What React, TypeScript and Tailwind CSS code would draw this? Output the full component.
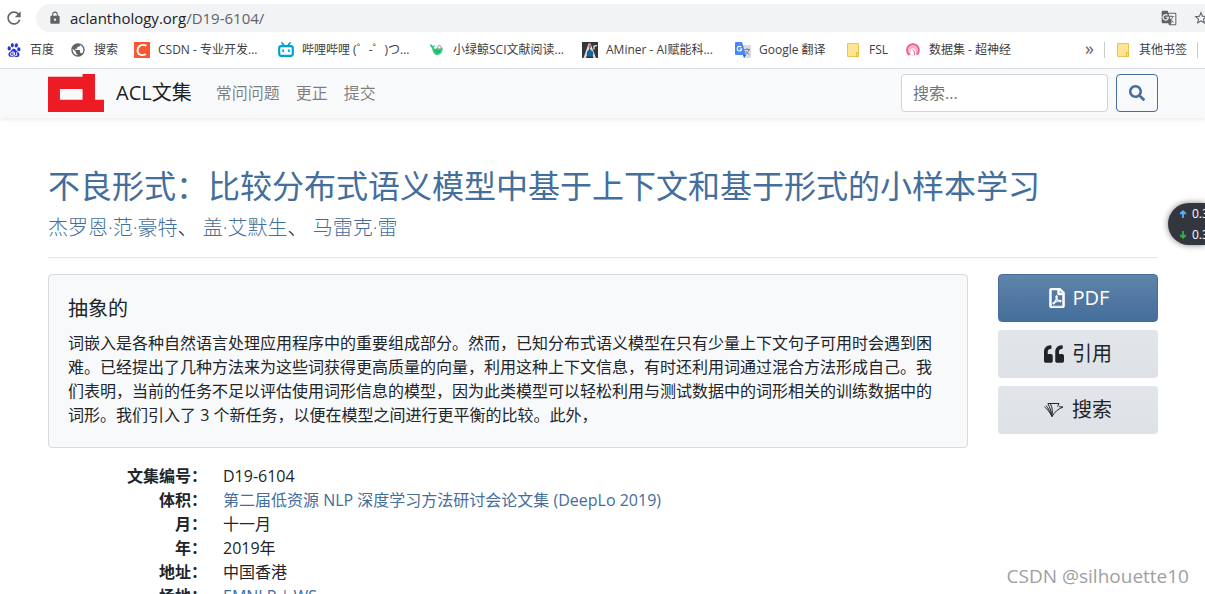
import React from "react";
import { FaQuoteLeft, FaRegFilePdf, FaSearch } from "react-icons/fa";
import { MdGTranslate, MdLock, MdPublic, MdRefresh, MdStarBorder } from "react-icons/md";
import { SiBaidu } from "react-icons/si";

const FolderIcon = () => (
  <svg viewBox="0 0 16 16" className="size-4">
    <path d="M2.500 1.500h11v13h-11z" fill="#ffe592" stroke="#ecc650" />
    <path d="M11.500 14.500v-4h2v4z" fill="#ffe592" stroke="#e5b93c" />
  </svg>
);

const CsdnIcon = () => (
  <svg viewBox="0 0 16 16" className="size-4">
    <path d="M0 0h16v16H0z" fill="#fc5531" />
    <path
      d="M12.400 4C10.600 2.600 7.300 2.400 5.300 4.200 3.200 6.200 3 9.800 4.500 11.600c1.700 2 5.300 1.800 7.300.4"
      fill="none"
      stroke="#fff"
      strokeWidth="1.900"
    />
  </svg>
);

const BilibiliIcon = () => (
  <svg viewBox="0 0 16 16" className="size-4">
    <path d="m4 1 2 2.500M12 1l-2 2.500" fill="none" stroke="#00a1d6" strokeWidth="1.800" strokeLinecap="round" />
    <rect x="1.200" y="4.200" width="13.600" height="9.600" rx="2" fill="none" stroke="#00a1d6" strokeWidth="2.200" />
    <path d="M5.200 7.500v2.500M10.800 7.500v2.500" stroke="#00a1d6" strokeWidth="1.800" />
    <path d="M3 14.500h2M11 14.500h2" stroke="#00a1d6" strokeWidth="1.500" />
  </svg>
);

const WhaleIcon = () => (
  <svg viewBox="0 0 16 16" className="size-4">
    <path
      d="M1 2.500c1.500 0 2.500.6 3 1.700.6-.7 1.300-.9 2-.7-.2 1.200-.7 2-1.600 2.500 2.200 1.800 3.400-.5 6-.5h3.200c.3 4.500-2 7.500-5.400 7.500C5 13 3.500 9.500 3 6 1.800 5.300 1 4 1 2.500z"
      fill="#2fc878"
    />
    <circle cx="10.300" cy="5" r="2.300" fill="#b9bcc0" />
    <circle cx="10.300" cy="5.300" r="1" fill="#fff" />
    <path d="M6.500 8.500c1 1.500 3 1.500 4.500.5" fill="none" stroke="#1a9a58" />
  </svg>
);

const AMinerIcon = () => (
  <svg viewBox="0 0 16 16" className="size-4">
    <path d="M0 0h16v16H0z" fill="#363636" />
    <path d="M1.500 16 6.500 1.500h2L14 16h-2.500L7.600 5.500 4 16z" fill="#d8dde2" />
    <circle cx="8" cy="11.500" r="3.200" fill="#16649c" />
    <path d="M6.800 2.500h2V6h-2z" fill="#b8567c" />
    <path d="M12 7.500V3.500M12 5c.5-1.200 1.500-1.500 3-1.200" fill="none" stroke="#e8e8e8" strokeWidth="1.200" />
  </svg>
);

const TranslateIcon = () => (
  <svg viewBox="0 0 16 16" className="size-4">
    <path d="M6 3h9a1 1 0 0 1 1 1v11a1 1 0 0 1-1 1H9z" fill="#dadce0" />
    <path
      d="M9.500 7.500H15M12.200 6v1.500M14 7.500c-.5 2.500-2 4-3.500 5M10.800 9c.8 1.700 2 2.800 3.500 3.500"
      fill="none"
      stroke="#7b8590"
    />
    <path d="M1 0h6l4 13H1a1 1 0 0 1-1-1V1a1 1 0 0 1 1-1z" fill="#4a87f0" />
    <path d="m8 13 3 0-2 3z" fill="#2a56c6" />
    <path d="M6.300 5.200A2.300 2.300 0 1 0 6.800 7H4.700" fill="none" stroke="#fff" strokeWidth="1.100" />
  </svg>
);

const HyperIcon = () => (
  <svg viewBox="0 0 16 16" className="size-4">
    <circle cx="8" cy="8" r="6" fill="#f9b4cd" />
    <path d="M4.500 13A6 6 0 1 1 12 12.500" fill="none" stroke="#ee5a92" strokeWidth="1.800" />
    <path d="M6 13.500C4.500 9 6 6.500 8 6.500s3.500 2.500 2.500 7z" fill="#fff" />
    <path d="M7.500 7.500c1.500 1 2.200 3 2 5.500" fill="none" stroke="#ee5a92" />
  </svg>
);

const ScholarIcon = () => (
  <svg viewBox="0 0 20 16" className="h-4 w-5" fill="none" stroke="#212529">
    <path d="M4 1.500h11l-1.500 3M8 14.500c2.500-4.500 6-7.500 11-9.500l-4-.3" />
    <path d="M8 14.500C6 10.500 3.500 7 .5 5M8 14.500C6.500 10 4.500 6.500 2 3.500M8 14.500C7.500 10 6.200 6 3.800 1.500M8 13C8.800 9 8.200 5 6.500 2" />
  </svg>
);

const bookmarks = [
  { label: "百度", width: "w-16", icon: <SiBaidu className="size-4 p-px text-[#2932e1]" /> },
  { label: "搜索", width: "w-16", icon: <MdPublic className="size-4 text-[#5f6368]" /> },
  { label: "CSDN - 专业开发...", width: "w-36", icon: <CsdnIcon /> },
  { label: "哔哩哔哩 (゜-゜)つ...", width: "w-[151px]", icon: <BilibiliIcon /> },
  { label: "小绿鲸SCI文献阅读...", width: "w-[153px]", icon: <WhaleIcon /> },
  { label: "AMiner - AI赋能科...", width: "w-[153px]", icon: <AMinerIcon /> },
  { label: "Google 翻译", width: "w-[110px]", icon: <TranslateIcon /> },
  { label: "FSL", width: "w-[60px]", icon: <FolderIcon /> },
  { label: "数据集 - 超神经", width: "w-[110px]", icon: <HyperIcon /> },
];

const authors = ["杰罗恩·范·豪特", "盖·艾默生", "马雷克·雷"];

const details = [
  { term: "文集编号：", value: "D19-6104" },
  { term: "体积：", value: "第二届低资源 NLP 深度学习方法研讨会论文集 (DeepLo 2019)", link: true },
  { term: "月：", value: "十一月" },
  { term: "年：", value: "2019年" },
  { term: "地址：", value: "中国香港" },
];

const BrowserBar = () => (
  <div className="bg-white text-[#3c4043]">
    <div className="flex items-center pt-1">
      <button aria-label="重新加载" className="flex w-9 items-center pl-1 text-[#5f6368]">
        <MdRefresh className="size-5" />
      </button>
      <div className="flex h-7 flex-1 items-center overflow-hidden rounded-l-full bg-[#f1f3f4] pl-3">
        <MdLock className="size-3.5 text-[#5f6368]" />
        <button className="ml-2 text-[15px] leading-5 text-[#202124]">
          aclanthology.org<span className="text-[#5f6368]">/D19-6104/</span>
        </button>
        <button aria-label="翻译此页" className="ml-auto text-[#5f6368]">
          <MdGTranslate className="size-4" />
        </button>
        <button aria-label="收藏" className="-mr-1 ml-4 text-[#5f6368]">
          <MdStarBorder className="size-4" />
        </button>
      </div>
    </div>
    <nav className="flex h-[37px] items-center border-b border-[#dadce0] pl-1.5 text-xs whitespace-nowrap">
      <div className="flex">
        {bookmarks.map((b) => (
          <a key={b.label} href="#" className={`flex items-center gap-2 ${b.width}`}>
            {b.icon}
            {b.label}
          </a>
        ))}
      </div>
      <div className="ml-auto flex items-center gap-2.5">
        <button aria-label="更多书签" className="pb-1 text-lg leading-4 text-[#5f6368]">
          »
        </button>
        <div className="h-4 w-px bg-[#c8cbcf]" />
        <a href="#" className="flex items-center gap-2">
          <FolderIcon />
          其他书签
        </a>
        <div className="mr-[7px] h-4 w-px bg-[#c8cbcf]" />
      </div>
    </nav>
  </div>
);

const Navbar = () => (
  <header className="flex items-center bg-linear-to-b from-[#f9fafb] to-[#f8f9fa] pt-[5px] pr-[47px] pb-1.5 pl-12 shadow-[0_2px_4px_rgba(0,0,0,0.075)]">
    <a href="#" className="flex items-center text-xl text-black/90">
      <svg viewBox="0 0 68 46" className="mr-3 h-[38px] w-14">
        <path fill="#ed1c24" d="M41.977 -.05V3.150H0v43.050h68v-15h-10.900V-.05zm0 18.200v13.050H14.500V18.150z" />
      </svg>
      ACL文集
    </a>
    <nav className="ml-6 flex gap-4 text-base text-black/50">
      <a href="#">常问问题</a>
      <a href="#">更正</a>
      <a href="#">提交</a>
    </nav>
    <form className="ml-auto flex gap-2">
      <input
        aria-label="搜索"
        placeholder="搜索..."
        className="h-[38px] w-[207px] rounded border border-[#ced4da] bg-white px-[11px] text-base placeholder:text-[#6c757d]"
      />
      <button
        type="button"
        aria-label="搜索"
        className="flex h-[38px] w-[42px] items-center justify-center rounded border border-[#446e9b] text-[#446e9b]"
      >
        <FaSearch className="size-4" />
      </button>
    </form>
  </header>
);

const SpeedBadge = () => (
  <div className="absolute top-[203px] right-0 flex h-[42px] w-[37px] flex-col justify-around overflow-hidden rounded-l-full bg-[#33363f] pl-2.5 text-xs leading-5 text-white shadow-[0_0_6px_rgba(0,0,0,0.5)]">
    {[
      { d: "M4.500 8V2M2 4.500l2.500-2.500 2.500 2.500", color: "#4db8ff" },
      { d: "M4.500 1v6M2 4.500l2.500 2.500 2.500-2.500", color: "#2fb344" },
    ].map((row) => (
      <div key={row.d} className="flex items-center gap-1">
        <svg viewBox="0 0 9 9" className="size-2.5 shrink-0">
          <path d={row.d} fill="none" stroke={row.color} strokeWidth="1.600" />
        </svg>
        0.3
      </div>
    ))}
  </div>
);

const App = () => {
  return (
    <div className="relative h-screen overflow-hidden bg-white font-['Open_Sans','Noto_Sans_CJK_SC',sans-serif] text-[#212529]">
      <BrowserBar />
      <Navbar />
      <main className="pt-12 pr-[47px] pl-12">
        <h2 className="text-[32px] leading-10 text-[#446e9b]">
          <a href="#">不良形式：比较分布式语义模型中基于上下文和基于形式的小样本学习</a>
        </h2>
        <p className="mt-2 text-xl leading-7 font-light">
          {authors.map((name, i) => (
            <React.Fragment key={name}>
              <a href="#" className="text-[#446e9b]">
                {name}
              </a>
              {i < authors.length - 1 && "、 "}
            </React.Fragment>
          ))}
        </p>
        <hr className="mt-[15px] mb-4 border-black/10" />
        <div className="flex items-start gap-[30px]">
          <div className="min-w-0 flex-1">
            <section className="rounded border border-[#d8dadc] bg-[#f8f9fa] pt-[22px] pr-6 pb-5 pl-[19px]">
              <h5 className="mb-2.5 text-xl leading-6">抽象的</h5>
              <p className="text-base leading-6">
                词嵌入是各种自然语言处理应用程序中的重要组成部分。然而，已知分布式语义模型在只有少量上下文句子可用时会遇到困难。已经提出了几种方法来为这些词获得更高质量的向量，利用这种上下文信息，有时还利用词通过混合方法形成自己。我们表明，当前的任务不足以评估使用词形信息的模型，因为此类模型可以轻松利用与测试数据中的词形相关的训练数据中的词形。我们引入了 3 个新任务，以便在模型之间进行更平衡的比较。此外，
              </p>
            </section>
            <dl className="mt-4 grid grid-cols-[159px_1fr] gap-x-4 text-base leading-6">
              {details.map((d) => (
                <React.Fragment key={d.term}>
                  <dt className="text-right font-bold">{d.term}</dt>
                  <dd>
                    {d.link ? (
                      <a href="#" className="text-[#446e9b]">
                        {d.value}
                      </a>
                    ) : (
                      d.value
                    )}
                  </dd>
                </React.Fragment>
              ))}
              <dt className="text-right font-bold">场地：</dt>
              <dd className="text-[#446e9b]">
                <a href="#">EMNLP</a> | <a href="#">WS</a>
              </dd>
            </dl>
          </div>
          <div className="flex w-40 flex-col gap-2 text-xl">
            <a
              href="#"
              className="flex h-12 items-center justify-center gap-1.5 rounded border border-[#446e9b] bg-linear-to-b from-[#6084aa] to-[#446e9b] text-white"
            >
              <FaRegFilePdf className="size-5 stroke-current stroke-[16]" />
              PDF
            </a>
            <button className="flex h-12 items-center justify-center gap-2 rounded bg-linear-to-b from-[#e2e5e9] to-[#dee2e6]">
              <FaQuoteLeft className="size-5" />
              引用
            </button>
            <a
              href="#"
              className="flex h-12 items-center justify-center gap-2 rounded bg-linear-to-b from-[#e2e5e9] to-[#dee2e6]"
            >
              <ScholarIcon />
              搜索
            </a>
          </div>
        </div>
      </main>
      <SpeedBadge />
      <div className="absolute right-4 bottom-1 text-[19px] leading-7 text-[#a0a0a0]">CSDN @silhouette10</div>
    </div>
  );
};

export default App;
